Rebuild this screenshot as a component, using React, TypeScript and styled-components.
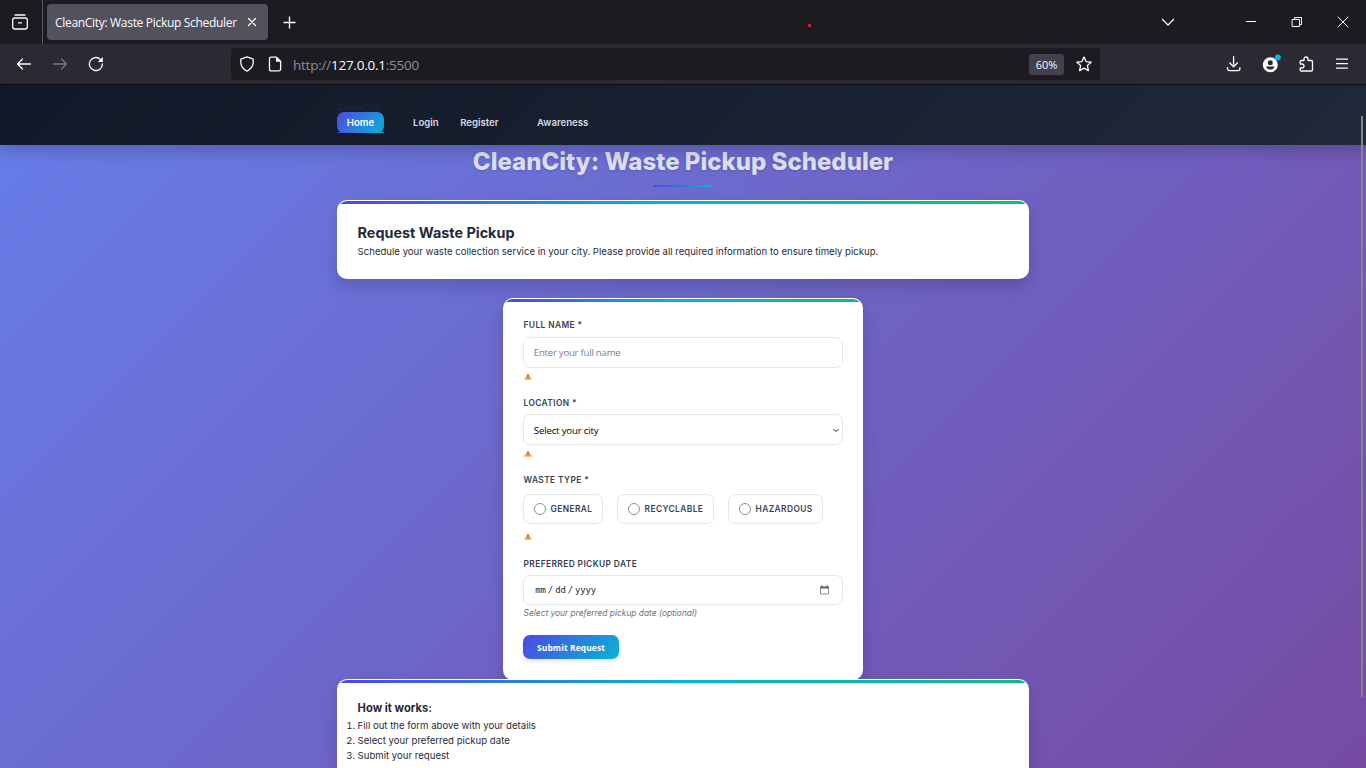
import React from "react";
import styled, { createGlobalStyle, css } from "styled-components";

const Global = createGlobalStyle`
  *, *::before, *::after { box-sizing: border-box; }
  body { margin: 0; overflow: hidden; }
  h1, h2, h3, p, ol { margin: 0; padding: 0; }
  button, input, select { font: inherit; margin: 0; }
`;

const rainbow = "linear-gradient(90deg, #4f46e5, #06b6d4, #10b981)";
const accent = "linear-gradient(135deg, #4f46e5, #06b6d4)";

const Window = styled.div`
  width: 1366px;
  height: 768px;
  display: flex;
  flex-direction: column;
  overflow: hidden;
  font-family: Inter, "Liberation Sans", sans-serif;
`;

const TabStrip = styled.div`
  height: 44px;
  flex: none;
  display: flex;
  align-items: center;
  background: #1c1b22;
  color: #fbfbfe;
`;

const Icon = styled.svg<{ $w?: number; $dim?: boolean }>`
  display: block;
  flex: none;
  width: ${(p) => p.$w ?? 16}px;
  height: ${(p) => p.$w ?? 16}px;
  fill: none;
  stroke: ${(p) => (p.$dim ? "#77767d" : "#fbfbfe")};
  stroke-width: 1.3;
  stroke-linecap: round;
  stroke-linejoin: round;
`;

const AccountIcon = styled(Icon)`
  margin-right: -2px;
  overflow: visible;
`;

const ViewSlot = styled.div`
  width: 43px;
  height: 44px;
  padding: 14px 0 0 12px;
  border-right: 1px solid #5b5a63;
`;

const Tab = styled.div`
  width: 221px;
  height: 36px;
  margin-left: 4px;
  padding: 0 11px 0 8px;
  display: flex;
  align-items: center;
  justify-content: space-between;
  border-radius: 4px;
  background: #52525e;
  font: 12px "Open Sans", "Noto Sans", sans-serif;
  letter-spacing: -0.31px;
  white-space: nowrap;
`;

const NewTab = styled.div`
  margin-left: 15px;
`;

const RecordDot = styled.div`
  width: 3px;
  height: 3px;
  margin: 7px 0 0 512px;
  border-radius: 1px;
  background: #f01a1a;
`;

const WindowControls = styled.div`
  margin-left: auto;
  padding-right: 17px;
  display: flex;
  align-items: center;
`;

const Control = styled.div<{ $gap: number }>`
  margin-left: ${(p) => p.$gap}px;
`;

const Toolbar = styled.div`
  height: 41px;
  flex: none;
  display: flex;
  align-items: center;
  padding: 0 16px;
  background: #2b2a33;
  border-bottom: 1px solid #0c0c0d;
`;

const NavButtons = styled.div`
  width: 215px;
  display: flex;
  gap: 20px;
`;

const UrlBar = styled.div`
  width: 869px;
  height: 32px;
  padding: 0 8px;
  display: flex;
  align-items: center;
  gap: 12px;
  border-radius: 4px;
  background: #1c1b22;
`;

const Url = styled.div`
  flex: 1;
  margin-left: -2px;
  padding-top: 1px;
  font: 13.5px "Open Sans", "Noto Sans", sans-serif;
  letter-spacing: -0.24px;
  color: #8f8f98;
  b { font-weight: 400; color: #fbfbfe; }
`;

const Zoom = styled.div`
  width: 35px;
  height: 21px;
  line-height: 21px;
  border-radius: 3px;
  background: #42414d;
  color: #fbfbfe;
  text-align: center;
  font-family: "Open Sans", "Noto Sans", sans-serif;
  font-size: 11px;
`;

const ToolbarActions = styled.div`
  margin-left: auto;
  padding-top: 1px;
  display: flex;
  gap: 20px;
`;

const Page = styled.div`
  position: relative;
  flex: 1;
  min-height: 0;
  overflow: hidden;
  background: linear-gradient(135deg, #667eea 0%, #764ba2 100%);
  color: #1f2937;
  font-size: 9.6px;
  line-height: 15.36px;
`;

const Scrollbar = styled.div`
  position: absolute;
  z-index: 2;
  right: 3px;
  top: 31px;
  width: 2px;
  height: 581px;
  background: #85838a;
`;

const Header = styled.header`
  position: relative;
  z-index: 1;
  height: 60px;
  padding: 15px 0 0 337px;
  background: linear-gradient(135deg, #111827 0%, #1f2937 100%);
  box-shadow: 0 6px 15px rgba(0, 0, 0, 0.2);
`;

const Brand = styled.div`
  height: 12px;
  line-height: 16px;
  color: #1f2937;
`;

const Nav = styled.nav`
  display: flex;
  align-items: center;
  height: 21px;
`;

const NavItem = styled.a<{ $active?: boolean; $gap?: number }>`
  margin-left: ${(p) => p.$gap ?? 0}px;
  height: 21px;
  line-height: 22px;
  font-weight: 600;
  color: #d7dae0;
  ${(p) =>
    p.$active &&
    css`
      position: relative;
      width: 47px;
      text-align: center;
      color: #fff;
      border-radius: 7px;
      background: ${accent};
      &::after {
        content: "";
        position: absolute;
        left: 1px;
        right: 0;
        bottom: 0;
        height: 1px;
        background: linear-gradient(90deg, #4f46e5, #06b6d4);
      }
    `}
`;

const Title = styled.h1`
  height: 55px;
  display: flex;
  flex-direction: column;
  align-items: center;
  font-size: 24px;
  font-weight: 800;
  line-height: 34px;
  color: #dddfee;
  text-shadow: 0 1px 3px rgba(0, 0, 0, 0.15);
  &::after {
    content: "";
    width: 60px;
    height: 2px;
    margin-top: 6px;
    border-radius: 1px;
    background: linear-gradient(90deg, #4f46e5, #06b6d4);
  }
`;

const Card = styled.section<{ $w: number; $h: number; $top?: number }>`
  width: ${(p) => p.$w}px;
  height: ${(p) => p.$h}px;
  margin: ${(p) => p.$top ?? 0}px auto 0;
  padding: 0 19.6px;
  overflow: hidden;
  border: 1px solid rgba(255, 255, 255, 0.9);
  border-radius: 10px;
  background: #fff;
  box-shadow: 0 8px 16px rgba(0, 0, 0, 0.16);
  &::before {
    content: "";
    display: block;
    height: 3px;
    margin: 0 -20px;
    background: ${rainbow};
  }
`;

const FormCard = styled(Card)`
  padding: 0 19px;
`;

const Stack = styled.main`
  display: flex;
  flex-direction: column;
`;

const CardTitle = styled.h2`
  margin: 19px 0 1px;
  font-size: 14.4px;
  line-height: 20px;
  font-weight: 700;
`;

const StepsTitle = styled.h3`
  margin: 16px 0 1px;
  font-size: 11.2px;
  line-height: 18px;
  font-weight: 700;
`;

const Steps = styled.ol`
  li { height: 15px; line-height: 15px; }
`;

const Label = styled.div<{ $top: number; $bottom: number }>`
  margin: ${(p) => p.$top}px 0 ${(p) => p.$bottom}px 0.5px;
  height: 12px;
  line-height: 13px;
  font-size: 8.4px;
  font-weight: 600;
  letter-spacing: 0.4px;
  color: #374151;
`;

const Field = styled.div<{ $h: number; $muted?: boolean }>`
  width: 320px;
  height: ${(p) => p.$h}px;
  padding: 0 3px 0 9.8px;
  display: flex;
  align-items: center;
  justify-content: space-between;
  border: 1px solid #e5e7eb;
  border-radius: 7px;
  font-family: "Open Sans", "Noto Sans", sans-serif;
  letter-spacing: ${(p) => (p.$muted ? "-0.23px" : "-0.15px")};
  color: ${(p) => (p.$muted ? "#7b7f87" : "#000")};
`;

const SelectText = styled.span`
  padding-top: 2px;
`;

const Chevron = styled.svg`
  margin-top: 2px;
`;

const DateText = styled.span`
  padding-left: 1.5px;
  font: 9px "DejaVu Sans Mono", monospace;
  letter-spacing: -0.13px;
  color: #1f2937;
  word-spacing: -3.3px;
`;

const WarningRow = styled.div<{ $top: number }>`
  height: 8px;
  margin: ${(p) => p.$top}px 0 0 1px;
`;

const Radios = styled.div`
  display: flex;
  gap: 14px;
`;

const RadioBox = styled.label<{ $w: number }>`
  width: ${(p) => p.$w}px;
  height: 30px;
  padding-left: 10px;
  display: flex;
  align-items: center;
  gap: 4.6px;
  border: 1px solid #e5e7eb;
  border-radius: 7px;
  font-size: 8.4px;
  font-weight: 600;
  letter-spacing: 0.4px;
  color: #374151;
`;

const RadioText = styled.span`
  padding-top: 1px;
`;

const RadioDot = styled.span`
  width: 12px;
  height: 12px;
  border: 1px solid #8f8f9d;
  border-radius: 50%;
`;

const Hint = styled.p`
  margin: 2px 0 0 0.6px;
  height: 13px;
  line-height: 13px;
  font-size: 8.4px;
  font-style: italic;
  color: #6b7280;
`;

const Submit = styled.button`
  display: block;
  width: 96px;
  height: 24px;
  margin-top: 15px;
  padding: 0;
  border: 0;
  border-radius: 7px;
  background: ${accent};
  box-shadow: 0 2px 4px rgba(0, 0, 0, 0.12);
  color: #fff;
  font: 700 8.4px "Open Sans", "Noto Sans", sans-serif;
  letter-spacing: 0.14px;
`;

const Warning = ({ top }: { top: number }) => (
  <WarningRow $top={top}>
    <svg width="8" height="7" viewBox="0 0 8 7" display="block">
      <path d="M4 0.4 7.6 6.4H0.4Z" fill="#f9ae4b" stroke="#f9ae4b" strokeWidth="0.6" strokeLinejoin="round" />
      <path d="M4 2v2.6M4 5.3v0.8" stroke="#7b5424" strokeWidth="1" />
    </svg>
  </WarningRow>
);

export default function App() {
  return (
    <Window>
      <Global />
      <TabStrip>
        <ViewSlot>
          <Icon viewBox="0 0 16 16">
            <path d="M3 1h10M2.6 4h10.8q1.9 0 1.9 1.9v7.2q0 1.9-1.9 1.9H2.6Q.7 15 .7 13.1V5.9Q.7 4 2.6 4ZM6.5 8.8h3" />
          </Icon>
        </ViewSlot>
        <Tab>
          <span>CleanCity: Waste Pickup Scheduler</span>
          <Icon $w={10} viewBox="0 0 10 10"><path d="M1.5 1.5l7 7M8.5 1.5l-7 7" /></Icon>
        </Tab>
        <NewTab>
          <Icon $w={13} viewBox="0 0 13 13"><path d="M6.5 1v11M1 6.5h11" /></Icon>
        </NewTab>
        <RecordDot />
        <WindowControls>
          <Icon $w={14} viewBox="0 0 14 14"><path d="M1.5 4.5L7 10l5.5-5.5" /></Icon>
          <Control $gap={70}><Icon $w={12} viewBox="0 0 12 12"><path d="M1 5.5h10" strokeWidth="1" strokeLinecap="butt" /></Icon></Control>
          <Control $gap={33}>
            <Icon $w={14} viewBox="0 0 14 14"><path d="M2.5 4.5h7v7h-7zM4.5 4.5v-2h7v7h-2" strokeLinejoin="miter" strokeWidth="1" /></Icon>
          </Control>
          <Control $gap={33}><Icon $w={12} viewBox="0 0 12 12"><path d="M1 1l10 10M11 1L1 11" strokeWidth="1" /></Icon></Control>
        </WindowControls>
      </TabStrip>
      <Toolbar>
        <NavButtons>
          <Icon viewBox="0 0 16 16"><path d="M14.5 8h-13M6.5 3l-5 5 5 5" /></Icon>
          <Icon $dim viewBox="0 0 16 16"><path d="M1.5 8h13M9.5 3l5 5-5 5" /></Icon>
          <Icon viewBox="0 0 16 16">
            <path d="M14.4 8A6.5 6.5 0 1 1 12.5 3.4" />
            <path d="M14.8 1v5h-5z" fill="#fbfbfe" stroke="none" />
          </Icon>
        </NavButtons>
        <UrlBar>
          <Icon viewBox="0 0 16 16"><path d="M8 .8l6.2 2.4v3.3c0 3.8-2.4 6.5-6.2 8.7-3.8-2.2-6.2-4.9-6.2-8.7V3.2Z" /></Icon>
          <Icon viewBox="0 0 16 16">
            <path d="M4 1.2h5.5L13.6 5.3v8q0 1.5-1.5 1.5H4q-1.5 0-1.5-1.5V2.7Q2.5 1.2 4 1.2Z" />
            <path d="M9 1v4.8h4.8z" fill="#fbfbfe" stroke="none" />
          </Icon>
          <Url>http://<b>127.0.0.1</b>:5500</Url>
          <Zoom>60%</Zoom>
          <Icon viewBox="0 0 16 16"><path d="M8 1l2.1 4.6 5 .6-3.7 3.4 1 5L8 12.1l-4.4 2.5 1-5L.9 6.2l5-.6Z" /></Icon>
        </UrlBar>
        <ToolbarActions>
          <Icon viewBox="0 0 16 16"><path d="M7.6 .6v10M3.8 7L7.6 10.8 11.4 7M1.5 11.6v1q0 2 2 2h8.4q2 0 2-2v-1" /></Icon>
          <AccountIcon $w={18} viewBox="0 0 18 18">
            <circle cx="8.3" cy="8.7" r="7.5" fill="#fbfbfe" stroke="none" />
            <circle cx="8.3" cy="6.7" r="2.5" fill="#2b2a33" stroke="none" />
            <path d="M4.1 10.4h8.4q-1.2 3.2-4.2 3.2t-4.2-3.2Z" fill="#2b2a33" stroke="none" />
            <circle cx="15.8" cy="1.5" r="3" fill="#00b3f4" stroke="none" />
          </AccountIcon>
          <Icon viewBox="0 0 16 16">
            <path d="M2.2 8V5.5q0-1 1-1H6V3a2 2 0 0 1 4 0v1.5H13.5q1 0 1 1V14q0 1-1 1H3.2q-1 0-1-1v-2H4a2 2 0 0 0 0-4Z" />
          </Icon>
          <Icon viewBox="0 0 16 16"><path d="M2.5 3.2h11M2.5 7.7h11M2.5 12.2h11" /></Icon>
        </ToolbarActions>
      </Toolbar>
      <Page>
        <Header>
          <Brand>CleanCity</Brand>
          <Nav>
            <NavItem $active>Home</NavItem>
            <NavItem $gap={29}>Login</NavItem>
            <NavItem $gap={21.5}>Register</NavItem>
            <NavItem $gap={38.5}>Awareness</NavItem>
          </Nav>
        </Header>
        <Title>CleanCity: Waste Pickup Scheduler</Title>
        <Stack>
          <Card $w={692} $h={79}>
            <CardTitle>Request Waste Pickup</CardTitle>
            <p>Schedule your waste collection service in your city. Please provide all required information to ensure timely pickup.</p>
          </Card>
          <FormCard as="form" $w={360} $h={382} $top={19}>
            <Label $top={17} $bottom={6}>FULL NAME *</Label>
            <Field $h={31} $muted>Enter your full name</Field>
            <Warning top={5} />
            <Label $top={16} $bottom={5}>LOCATION *</Label>
            <Field $h={31}>
              <SelectText>Select your city</SelectText>
              <Chevron width="6" height="5" viewBox="0 0 6 5"><path d="M.5 1L3 3.5 5.5 1" fill="none" stroke="#222" /></Chevron>
            </Field>
            <Warning top={5} />
            <Label $top={16} $bottom={8}>WASTE TYPE *</Label>
            <Radios>
              <RadioBox $w={80}><RadioDot /><RadioText>GENERAL</RadioText></RadioBox>
              <RadioBox $w={97}><RadioDot /><RadioText>RECYCLABLE</RadioText></RadioBox>
              <RadioBox $w={95}><RadioDot /><RadioText>HAZARDOUS</RadioText></RadioBox>
            </Radios>
            <Warning top={9} />
            <Label $top={17} $bottom={5}>PREFERRED PICKUP DATE</Label>
            <Field $h={30}>
              <DateText>mm / dd / yyyy</DateText>
              <svg width="19" height="10" viewBox="0 0 19 10">
                <path d="M.5 2.5h8v6.5h-8Z" fill="none" stroke="#8a8f99" />
                <path d="M0 1.5h9v2H0zM1.5 0h1v2h-1zM6.5 0h1v2h-1z" fill="#5b606b" />
              </svg>
            </Field>
            <Hint>Select your preferred pickup date (optional)</Hint>
            <Submit type="button">Submit Request</Submit>
          </FormCard>
          <Card $w={692} $h={200} $top={-1}>
            <StepsTitle>How it works:</StepsTitle>
            <Steps>
              <li>Fill out the form above with your details</li>
              <li>Select your preferred pickup date</li>
              <li>Submit your request</li>
            </Steps>
          </Card>
        </Stack>
        <Scrollbar />
      </Page>
    </Window>
  );
}
